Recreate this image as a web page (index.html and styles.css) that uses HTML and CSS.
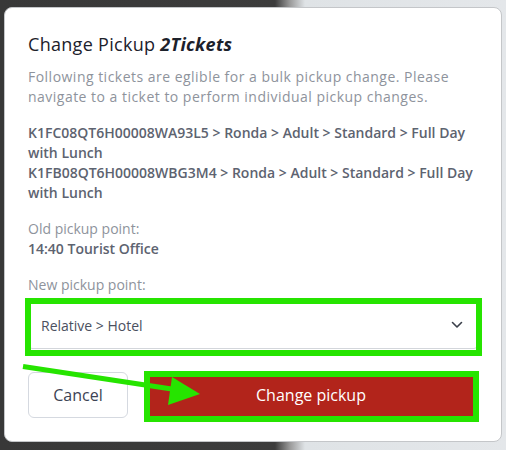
FILE: index.html
```html
<!DOCTYPE html>
<html>
<head>
<meta charset="utf-8">
<link rel="stylesheet" href="styles.css">
</head>
<body>
<div class="modal">
  <h2 class="title">Change Pickup <em>2Tickets</em></h2>
  <p class="desc">Following tickets are eglible for a bulk pickup change. Please navigate to a ticket to perform individual pickup changes.</p>
  <div class="tickets">
    <div>K1FC08QT6H00008WA93L5 &gt; Ronda &gt; Adult &gt; Standard &gt; Full Day with Lunch</div>
    <div>K1FB08QT6H00008WBG3M4 &gt; Ronda &gt; Adult &gt; Standard &gt; Full Day with Lunch</div>
  </div>
  <div class="old">
    <div class="label">Old pickup point:</div>
    <div class="value">14:40 Tourist Office</div>
  </div>
  <div class="label new-label">New pickup point:</div>
  <div class="select-wrap">
    <div class="select">
      <span>Relative &gt; Hotel</span>
      <svg class="chev" width="12" height="8" viewBox="0 0 12 8"><path d="M1.5 1.5 L6 6 L10.5 1.5" fill="none" stroke="#3a3f4a" stroke-width="1.6" stroke-linecap="round" stroke-linejoin="round"/></svg>
    </div>
    <span class="annot annot-select"></span>
  </div>
  <div class="actions">
    <button class="btn btn-cancel">Cancel</button>
    <div class="primary-wrap">
      <button class="btn btn-primary">Change pickup</button>
      <span class="annot annot-btn"></span>
    </div>
  </div>
</div>
<svg class="arrow" width="506" height="450" viewBox="0 0 506 450">
  <line x1="23" y1="366.5" x2="175" y2="389.5" stroke="#26e400" stroke-width="5"/>
  <polygon points="172,377 168,405 200,394" fill="#26e400"/>
</svg>
</body>
</html>
```

FILE: styles.css
```css
html, body {
  margin: 0;
  padding: 0;
}
body {
  width: 506px;
  height: 450px;
  overflow: hidden;
  position: relative;
  background: linear-gradient(90deg, #383838 0, #3c3c3c 275px, #9a9a9a 290px, #dfe3e6 305px, #e4e7ea 100%);
  font-family: "Open Sans", "Liberation Sans", sans-serif;
}
.modal {
  box-sizing: border-box;
  margin: 7px 4px 0 4px;
  height: 435px;
  background: #ffffff;
  border: 1px solid #c4c6c9;
  border-radius: 8px;
  padding: 24px 23px 0 23px;
}
.title {
  margin: 0;
  font-size: 18px;
  line-height: 24px;
  font-weight: 400;
  letter-spacing: 0.3px;
  color: #1c212b;
}
.title em {
  font-style: italic;
  font-weight: 700;
}
.desc {
  margin: 11px 0 0 0;
  font-size: 14px;
  line-height: 20px;
  letter-spacing: 0.48px;
  color: #8e939c;
}
.tickets {
  margin-top: 16px;
  font-size: 14px;
  line-height: 20px;
  font-weight: 600;
  color: #5d6370;
}
.old {
  margin-top: 16px;
}
.label {
  font-size: 14px;
  line-height: 20px;
  color: #8e939c;
}
.value {
  font-size: 14px;
  line-height: 20px;
  font-weight: 600;
  color: #5d6370;
}
.new-label {
  margin-top: 16px;
}
.select-wrap {
  position: relative;
  margin-top: 6px;
}
.select {
  box-sizing: border-box;
  height: 48px;
  border: 1px solid #d3d6db;
  border-radius: 4px;
  display: flex;
  align-items: center;
  justify-content: space-between;
  padding: 0 14px 0 12px;
  font-size: 14px;
  color: #4b5060;
}
.chev {
  display: block;
}
.annot {
  position: absolute;
  box-sizing: border-box;
  border: 6px solid #26e400;
  pointer-events: none;
}
.annot-select {
  left: -3px;
  top: -3px;
  right: -4px;
  bottom: -7px;
}
.actions {
  margin-top: 23px;
  display: flex;
  gap: 16px;
}
.btn {
  box-sizing: border-box;
  height: 46px;
  font-family: inherit;
  font-size: 16px;
  border-radius: 6px;
  cursor: pointer;
}
.btn-cancel {
  width: 100px;
  background: #ffffff;
  border: 1px solid #d5d9e0;
  color: #3d4354;
}
.primary-wrap {
  position: relative;
  flex: 1;
}
.btn-primary {
  width: 100%;
  border: none;
  border-radius: 0;
  background: #b2241b;
  color: #ffffff;
}
.annot-btn {
  left: 0;
  top: -1px;
  right: -1px;
  bottom: -4px;
}
.arrow {
  position: absolute;
  left: 0;
  top: 0;
  pointer-events: none;
}
```
